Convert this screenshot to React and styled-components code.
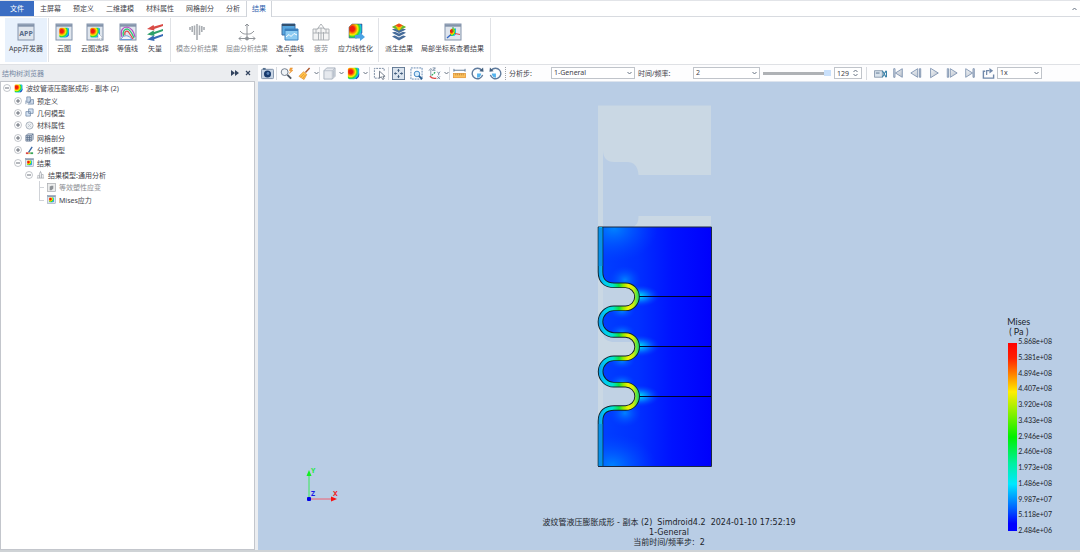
import React, { useState } from 'react';
import styled, { createGlobalStyle } from 'styled-components';

const GlobalStyle = createGlobalStyle`
  * {
    box-sizing: border-box;
  }

  body {
    margin: 0;
    font-family: "Noto Sans", "Noto Sans CJK SC", sans-serif;
    font-size: 7px;
    color: #3f434a;
    background: #ffffff;
  }

  button, input, select {
    font: inherit;
    color: inherit;
    margin: 0;
    padding: 0;
    border: 0;
    background: none;
  }

  svg {
    display: block;
    flex: none;
  }
`;

const Window = styled.div`
  display: flex;
  flex-direction: column;
  min-height: 100vh;
  border-top: 1px solid #e2e4e8;
`;

/* Tabs */
const TabBar = styled.nav`
  display: flex;
  align-items: stretch;
  height: 16px;
  border-bottom: 1px solid #d8dbe0;
`;

const Tab = styled.button`
  padding: 0 6px;
  line-height: 14px;
  white-space: nowrap;
  ${({ $file }) => $file && `
    width: 34px;
    background: #3a6dc3;
    color: #ffffff;
  `}
  ${({ $active }) => $active && `
    padding: 0 5px;
    margin-bottom: -1px;
    border: 1px solid #d0d4da;
    border-width: 0 1px;
    background: #ffffff;
    color: #2f62ad;
  `}
`;

const CollapseButton = styled.button`
  margin-left: auto;
  padding: 0 3px;
`;

/* Ribbon */
const Ribbon = styled.div`
  display: flex;
  height: 48px;
  padding: 1px 0 1px 4px;
  border-bottom: 1px solid #dfe1e5;
`;

const RibbonGroup = styled.div`
  display: flex;
  padding: 0 ${({ $inset }) => $inset}px;
  border-right: 1px solid #e0e2e6;
  margin-bottom: 1px;
`;

const RibbonButton = styled.button`
  display: flex;
  flex-direction: column;
  align-items: center;
  padding: 5px 4px 0;
  white-space: nowrap;
  background: ${({ $active }) => ($active ? '#e8f1fc' : 'transparent')};
  color: ${({ $muted }) => ($muted ? '#85888d' : '#3f434a')};

  span {
    margin-top: 3px;
    line-height: 10px;
  }
`;

/* Body */
const Body = styled.div`
  display: flex;
  flex: 1;
  border-bottom: 2px solid #cfd3d6;
`;

const SidePanel = styled.aside`
  display: flex;
  flex-direction: column;
  flex: 0 0 258px;
  padding-right: 3px;
  background: #ebedf0;
`;

const PanelHeader = styled.div`
  display: flex;
  align-items: center;
  gap: 6px;
  height: 16px;
  padding: 0 4px 0 2px;
  color: #7587a3;

  h2 {
    flex: 1;
    margin: 0;
    font-size: 7px;
    font-weight: 400;
  }
`;

const Tree = styled.div`
  flex: 1;
  border: 1px solid #c3c6cc;
  background: #ffffff;
`;

const TreeList = styled.ul`
  display: grid;
  grid-template-rows: repeat(10, 1fr);
  height: 124px;
  margin: 0;
  padding: 0;
  list-style: none;
`;

const TreeRow = styled.li`
  display: flex;
  align-items: center;
  gap: 3px;
  padding-left: ${({ $level }) => 2 + $level * 11}px;
  white-space: nowrap;
  color: ${({ $muted }) => ($muted ? '#8a8d92' : '#3f434a')};
`;

const Main = styled.main`
  display: flex;
  flex-direction: column;
  flex: 1;
  min-width: 0;
`;

const Toolbar = styled.div`
  display: flex;
  align-items: center;
  height: 17px;
  border-bottom: 1px solid #dde4ee;
  background: #fdfdfe;
`;

const ToolButton = styled.button`
  display: flex;
  align-items: center;
  justify-content: center;
  flex: none;
  width: ${({ $narrow }) => ($narrow ? 6 : 18)}px;
  height: 14px;
`;

const Divider = styled.span`
  flex: none;
  width: 1px;
  height: 13px;
  border-left: 1px ${({ $dotted }) => ($dotted ? 'dotted #a0a4aa' : 'solid #d8dbe0')};
  margin-left: ${({ $space }) => $space || 0}px;
`;

const Playback = styled.div`
  display: flex;
  align-items: center;
  padding-left: 4px;
`;

const FieldLabel = styled.label`
  flex: none;
  width: ${({ $width }) => $width}px;
  padding-left: 3px;
  white-space: nowrap;
`;

const SelectBox = styled.span`
  display: flex;
  align-items: center;
  flex: none;
  width: ${({ $width }) => $width}px;
  height: 12px;
  padding-right: 2px;
  border: 1px solid #c0c4ca;
  background: #ffffff;

  select {
    flex: 1;
    min-width: 0;
    height: 10px;
    padding-left: 2px;
    line-height: 10px;
    appearance: none;
    outline: none;
  }

  svg {
    pointer-events: none;
  }
`;

const Slider = styled.input`
  appearance: none;
  flex: none;
  width: 68px;
  height: 6px;
  margin: 0 3px;
  background: linear-gradient(#aeb1b5, #aeb1b5) center / 100% 3px no-repeat;

  &::-webkit-slider-thumb {
    appearance: none;
    width: 7px;
    height: 6px;
    background: #c9e0fb;
  }
`;

const SpinBox = styled.span`
  display: flex;
  align-items: center;
  flex: none;
  width: 28px;
  height: 12px;
  border: 1px solid #c0c4ca;
  background: #ffffff;

  input {
    width: 18px;
    padding-left: 2px;
    outline: none;
  }
`;

/* Viewport */
const Viewport = styled.section`
  position: relative;
  flex: 1;
  min-height: 468px;
  background: #b9cde5;
  color: #20242a;
`;

const ModelView = styled.svg`
  position: absolute;
  top: 22px;
  left: calc(50% - 72px);
`;

const AxisTriad = styled.svg`
  position: absolute;
  left: 42px;
  bottom: 45px;
`;

const Caption = styled.div`
  position: absolute;
  left: 0;
  right: 0;
  bottom: 2px;
  text-align: center;
  font-family: "DejaVu Sans", "Noto Sans CJK SC", sans-serif;
  font-size: 8px;
  line-height: 10px;
  white-space: pre;
`;

const Legend = styled.div`
  position: absolute;
  right: 28px;
  bottom: 16px;
  font-family: Lato, "Noto Sans CJK SC", sans-serif;
`;

const LegendTitle = styled.div`
  width: 25px;
  font-size: 9px;
  line-height: 9px;
  text-align: center;
  margin-bottom: 1px;
`;

const LegendScale = styled.div`
  display: flex;
  gap: 1px;
  padding-left: 2px;
`;

const LegendBar = styled.div`
  width: 9px;
  margin: 6px 0 3px;
  background: linear-gradient(#ff0000 0%, #ff2000 8%, #ffee00 26%, #80f000 38%, #00f000 50%, #00f0a0 64%, #00e8ff 75%, #0060ff 88%, #0000ff 96%);
`;

const LegendValues = styled.div`
  display: flex;
  flex-direction: column;
  justify-content: space-between;
  height: 197px;
  font-size: 7px;
  line-height: 8px;
`;

const Defs = styled.svg`
  position: absolute;
  width: 0;
  height: 0;
`;

/* Icons */
const SharedDefs = () => (
  <Defs aria-hidden="true">
    <defs>
      <radialGradient id="rainbow" cx="0.25" cy="0.35" r="0.85">
        <stop offset="0.2" stopColor="#f01c10" />
        <stop offset="0.38" stopColor="#ff9a00" />
        <stop offset="0.5" stopColor="#f8f000" />
        <stop offset="0.66" stopColor="#30d830" />
        <stop offset="0.8" stopColor="#18c8e8" />
        <stop offset="1" stopColor="#1040d8" />
      </radialGradient>
      <linearGradient id="steel" x1="0" y1="0" x2="1" y2="1">
        <stop offset="0" stopColor="#f4f6f9" />
        <stop offset="1" stopColor="#b7bfca" />
      </linearGradient>
    </defs>
  </Defs>
);

const BLOB = 'M1 3 Q1 1 3 1 H12 Q14 1 14 3 V9 Q14 14 8 14 H3 Q1 14 1 12 Z';

const Blob = ({ size = 13 }) => (
  <svg width={size} height={size} viewBox="0 0 15 15">
    <path d={BLOB} fill="url(#rainbow)" />
    <path d="M10 13 Q14 11 14 7 V10 L11 14 Z" fill="#2448a8" />
  </svg>
);

const Frame = ({ children, tone = '#8494ab' }) => (
  <>
    <rect x="1" y="1" width="16" height="16" fill="#dfe5ed" stroke={tone} />
    <path d="M1 2.5 H17" stroke={tone} strokeWidth="2.4" />
    {children}
  </>
);

const AppIcon = () => (
  <svg width="18" height="18" viewBox="0 0 18 18">
    <Frame>
      <text x="9" y="13" textAnchor="middle" fontSize="7" fontWeight="700" fill="#586b88">APP</text>
    </Frame>
  </svg>
);

const CloudIcon = ({ pick, size = 18 }) => (
  <svg width={size} height={size} viewBox="0 0 18 18">
    <Frame>
      <g transform="translate(3.5 4) scale(0.75)"><path d={BLOB} fill="url(#rainbow)" /></g>
      {pick && <path d="M12 10 V17 L13.500 15.500 L14.500 17.500 L15.500 17 L15 15 H17 Z" fill="#fff" stroke="#a5afbd" strokeWidth="0.6" />}
    </Frame>
  </svg>
);

const IsolineIcon = () => (
  <svg width="18" height="18" viewBox="0 0 18 18" fill="none">
    <Frame />
    <path d="M3 14 C1 7 4 4 8 4 C13 5 15 9 16 14" stroke="#b44cc0" strokeWidth="1.2" />
    <path d="M4.500 13 C3 8 6 6 8.500 6 C12 7 13 11 15 15" stroke="#2dc270" strokeWidth="1.3" />
    <path d="M6 12 C5 8 8 7.500 9.500 9 C11 11 12 13 14 16" stroke="#e04848" strokeWidth="1.2" />
    <path d="M1.500 16.500 C5 11 10 12 13 16.500 Z" fill="#f3f6fa" stroke="#6d9ad6" />
  </svg>
);

const VectorIcon = () => (
  <svg width="18" height="18" viewBox="0 0 18 18">
    <path d="M17 1 L8 3.500 L7.500 2 L1 6 L8.500 7.500 L8.200 6 L17 3 Z" fill="#d94b46" />
    <path d="M17 6 L8 9 L7.500 7.500 L1 11.500 L8.500 13 L8.200 11.300 L17 8 Z" fill="#2fa06a" />
    <path d="M17 11 L8 14 L7.500 12.500 L1 16.500 L8.500 18 L8.200 16.300 L17 13 Z" fill="#3769b5" />
  </svg>
);

const ModalIcon = () => (
  <svg width="18" height="18" viewBox="0 0 18 18" stroke="#a9adb2" strokeWidth="1.6">
    <path d="M9 1 V17 M6.500 2.500 V12 M11.500 2.500 V12 M4.200 3 V9 M13.800 3 V9 M2 4 V7 M16 4 V7" />
  </svg>
);

const BucklingIcon = () => (
  <svg width="18" height="18" viewBox="0 0 18 18" fill="none" stroke="#8f9398">
    <path d="M9 1 V16 M1 15.500 H17 M7 3 L9 1 L11 3 M15 13.500 L17 15.500 L15 17.500 M3 13.500 L1 15.500 L3 17.500 M2 8 C5 11.500 7 11 9 11 C11 11 13 11.500 16 8" />
    <circle cx="9" cy="15.500" r="1.500" fill="#8f9398" />
  </svg>
);

const CurveIcon = () => (
  <svg width="18" height="18" viewBox="0 0 18 18">
    <path d="M1 1 H14 V12 H1 Z" fill="#57a6df" stroke="#3f6da0" />
    <path d="M1 2 H14" stroke="#33506f" strokeWidth="2" />
    <path d="M4 6 H17 V17 H4 Z" fill="#8ccbf2" stroke="#3e86c4" />
    <path d="M4 7 H17" stroke="#3a7fbd" strokeWidth="2" />
    <path d="M5 14 L8 11.500 L10 13.500 L13 10.500 L16 12" fill="none" stroke="#fff" />
  </svg>
);

const FatigueIcon = () => (
  <svg width="18" height="18" viewBox="0 0 18 18" fill="#f4f4f4" stroke="#a7abb0" strokeWidth="0.9">
    <path d="M9 1 L6 5 V9 M9 1 L12 5 V9" fill="none" />
    <path d="M1 6 H6 V5 H12 V6 H17 V17 H1 Z" />
    <path d="M1 10 H17 M4 6 V10 M9 5 V17 M14 6 V10 M6.500 9 V17 M11.500 9 V17" fill="none" />
  </svg>
);

const LinearIcon = () => (
  <svg width="18" height="18" viewBox="0 0 18 18">
    <path d="M2 4 L5 1 H15 V10 L10 15 H2 Z" fill="url(#rainbow)" stroke="#446" strokeWidth="0.500" />
    <path d="M8 12 H13 V9.500 L18 14 L13 18 V15.500 H8 Z" fill="#4ba3e4" />
  </svg>
);

const LayersIcon = () => (
  <svg width="18" height="18" viewBox="0 0 18 18">
    <path d="M2 13.500 L9 10.500 L16 13.500 L9 17.500 Z" fill="#466c9a" />
    <path d="M2 11 L9 8 L16 11 L9 14.500 Z" fill="#fff" />
    <path d="M2 9.800 L9 7 L16 9.800 L9 13.500 Z" fill="#466c9a" />
    <path d="M2 7.500 L9 5 L16 7.500 L9 10.500 Z" fill="#fff" />
    <path d="M2 6.500 L9 4 L16 6.500 L9 10 Z" fill="#466c9a" />
    <path d="M2 4 L9 0.500 L16 4 L9 7.500 Z" fill="#ffc400" />
    <path d="M5 2.500 L9 0.500 L13 2.500 L9 4.500 Z" fill="#ef4b23" />
    <path d="M2 4 L5.500 2.300 L9 7.500 Z M16 4 L12.500 2.300 L9 7.500 Z" fill="#5cb840" />
    <path d="M5 2.500 L9 7.500 L13 2.500 L9 4.500 Z" fill="#ffc400" />
  </svg>
);

const LocalAxisIcon = () => (
  <svg width="18" height="18" viewBox="0 0 18 18">
    <Frame />
    <path d="M6 7 L8 5.500 H12 V11 L10 13 H6 Z" fill="url(#rainbow)" />
    <path d="M9 9 V4" stroke="#2da843" />
    <path d="M11 10.500 L16 11.500" stroke="#e34343" />
    <path d="M7 11.500 L3 15" stroke="#3065c5" strokeWidth="1.300" />
  </svg>
);

const Chevron = ({ up }) => (
  <svg width="5" height="4" viewBox="0 0 5 4" fill="none" stroke="#667282">
    <path d={up ? 'M0.500 3 L2.500 1 L4.500 3' : 'M0.500 1 L2.500 3 L4.500 1'} />
  </svg>
);

const Tool = ({ children, size = 13 }) => (
  <svg width={size} height={size} viewBox="0 0 14 14" fill="none" stroke="#55708f">
    {children}
  </svg>
);

const CameraIcon = () => (
  <Tool>
    <rect x="0.500" y="2.500" width="13" height="10" rx="1" fill="#c7d4e4" stroke="#7d90a8" />
    <circle cx="7" cy="7.500" r="3.800" fill="#17396b" stroke="none" />
    <circle cx="7.500" cy="7" r="1.500" fill="#5b84b8" stroke="none" />
    <path d="M2 2 H5" strokeWidth="2" />
  </Tool>
);

const SearchIcon = () => (
  <Tool>
    <circle cx="5" cy="5.500" r="3.700" fill="#eef2f6" stroke="#6b7787" />
    <path d="M8 8.500 L12 12.500" stroke="#4a5563" strokeWidth="2" />
    <path d="M11 1 L10 4 H12 L10 7 L14 3.500 H12 L13.500 1 Z" fill="#f1a13a" stroke="#e58a24" strokeWidth="0.500" />
  </Tool>
);

const BroomIcon = () => (
  <Tool>
    <path d="M8 6 L12.500 1" stroke="#ad5a30" strokeWidth="1.600" />
    <path d="M6 5 L9.500 8 L6.500 13.500 L1 10 Z" fill="#ffc34a" stroke="#e08a28" strokeWidth="0.700" />
    <path d="M3 11 L6.500 7.500 M5 12.500 L8 8.500" stroke="#e08a28" strokeWidth="0.700" />
  </Tool>
);

const CubeIcon = () => (
  <Tool>
    <path d="M1 4 L4 1 H13 V10 L10 13 H1 Z" fill="#e6e9ee" stroke="#a9b2be" />
    <path d="M1 4 H10 V13 M10 4 L13 1" stroke="#a9b2be" strokeWidth="0.700" />
    <path d="M10.500 4.200 L12.500 2.200 V9.700 L10.500 11.700 Z" fill="#bac2cd" stroke="none" />
  </Tool>
);

const PickIcon = () => (
  <Tool>
    <path d="M7 12 H1.500 V1.500 H12 V5" strokeDasharray="2 1" stroke="#70839b" />
    <path d="M7 4.500 V12 L9 10.500 L10.500 13.500 L12 12.500 L10.700 10 H13 Z" fill="#fff" stroke="#5e6978" strokeWidth="0.900" />
  </Tool>
);

const FitIcon = () => (
  <Tool>
    <rect x="0.500" y="0.500" width="13" height="13" fill="#dbe4ee" stroke="#5f7792" />
    <path d="M7 3 V5.500 M7 8.500 V11 M3 7 H5.500 M8.500 7 H11" stroke="#3f5b7c" />
    <path d="M5.500 4 L7 2 L8.500 4 Z M5.500 10 L7 12 L8.500 10 Z M4 5.500 L2 7 L4 8.500 Z M10 5.500 L12 7 L10 8.500 Z" fill="#3f5b7c" stroke="none" />
  </Tool>
);

const ZoomAreaIcon = () => (
  <Tool>
    <rect x="1" y="1" width="12" height="12" strokeDasharray="2 1" stroke="#5c83ad" />
    <circle cx="7.500" cy="7.500" r="3" fill="#d7ecfb" stroke="#3a83c2" />
    <path d="M9.500 9.500 L13 13" stroke="#275d93" strokeWidth="2" />
  </Tool>
);

const AxesIcon = () => (
  <Tool>
    <path d="M3 10 V3 M1 4 L3 1.500 L5 4" stroke="#8494a7" />
    <path d="M4 9 L8.500 5" stroke="#2da85b" strokeDasharray="2 1" strokeWidth="1.300" />
    <path d="M2 10 C4 12 7 12.500 9 12" stroke="#dd4545" strokeWidth="1.500" />
    <path d="M5 1 H8 L5.500 3.500 H8 M10 5 L11.500 7 L13 5 M11.500 7 V9 M10 10 L13 13 M13 10 L10 13" strokeWidth="0.800" />
  </Tool>
);

const RulerIcon = () => (
  <Tool>
    <path d="M1 3.500 H13 M1 2 V5 M13 2 V5" stroke="#5b7693" />
    <rect x="0.500" y="7" width="13" height="4.500" fill="#fbbf5b" stroke="#e29432" strokeWidth="0.800" />
    <path d="M3 7 V9 M5 7 V9 M7 7 V9 M9 7 V9 M11 7 V9" stroke="#a76d28" strokeWidth="0.600" />
  </Tool>
);

const RotateIcon = ({ flip }) => (
  <Tool>
    <g transform={flip ? 'translate(14 0) scale(-1 1)' : undefined}>
      <path d="M11.500 3.500 A5.700 5.700 0 1 0 12.500 8.500" stroke="#5f7b9d" strokeWidth="1.500" />
      <path d="M9 4.500 L13.500 5 L13 0.500 Z" fill="#43607f" stroke="none" />
      <path d="M6.500 7 V11.500 A4.500 4.500 0 0 0 11 7 Z" fill="#55b4ee" stroke="none" />
    </g>
  </Tool>
);

const RecordIcon = () => (
  <Tool>
    <path d="M0.500 4 H9 V11 H0.500 Z" fill="#d8e2ec" stroke="#8798ad" />
    <path d="M2 6.500 H6" />
    <path d="M9 4 L13 11 M13 4 L9 11 M13.500 4 V11" stroke="#3d84aa" strokeWidth="1.300" />
  </Tool>
);

const PlayShape = ({ kind }) => (
  <Tool size={12}>
    <g fill="url(#steel)" stroke="#7b90ae">
      {kind === 'first' && <path d="M2 2 H3.500 V12 H2 Z M12 2 V12 L4 7 Z" />}
      {kind === 'prev' && <path d="M9 2 V12 L1 7 Z M11 2 H12.500 V12 H11 Z" />}
      {kind === 'play' && <path d="M3 1.500 V12.500 L12 7 Z" />}
      {kind === 'next' && <path d="M5 2 V12 L13 7 Z M1.500 2 H3 V12 H1.500 Z" />}
      {kind === 'last' && <path d="M2 2 V12 L10 7 Z M10.500 2 H12 V12 H10.500 Z" />}
    </g>
  </Tool>
);

const LoopIcon = () => (
  <Tool>
    <path d="M3.500 4.500 H1.500 V12 H12.500 V8" stroke="#7189aa" strokeWidth="1.500" />
    <path d="M5 8.500 V4 H8" stroke="#7189aa" strokeWidth="1.300" />
    <path d="M8 1 L12 4 L8 7 Z" fill="#7189aa" stroke="none" />
  </Tool>
);

const Expander = styled.button`
  flex: none;
  width: 8px;
  height: 8px;
`;

const ExpandIcon = ({ open }) => (
  <svg width="8" height="8" viewBox="0 0 8 8" fill="none" stroke="#59606b">
    <circle cx="4" cy="4" r="3.500" stroke="#a9adb4" strokeWidth="0.700" />
    <path d={open ? 'M2 4 H6' : 'M2 4 H6 M4 2 V6'} strokeWidth="0.900" />
  </svg>
);

const TreeIcon = ({ kind }) => {
  if (kind === 'root') return <Blob size={9} />;
  if (kind === 'result') return <CloudIcon size={9} />;
  return (
    <svg width="9" height="9" viewBox="0 0 10 10" fill="none" stroke="#6d84a3" strokeWidth="0.800">
      {kind === 'define' && <path d="M2 1 H6 V7 H2 Z M1 9 V5 M4 8 L7 4 H9.500 V9 H3" fill="#cbd8e8" />}
      {kind === 'geometry' && <path d="M4 1 H9 V6 H4 Z M1 4 H6 V9 H1 Z" fill="#d6e4f4" />}
      {kind === 'material' && (
        <>
          <circle cx="5" cy="5" r="4" fill="#edf0f3" stroke="#95a0ad" />
          <path d="M3 3 L7 7 M7 3 L3 7" stroke="#b5bdc7" />
        </>
      )}
      {kind === 'mesh' && <path d="M1 3 L3 1 H9 V7 L7 9 H1 Z M1 3 H7 V9 M7 3 L9 1 M3 3 V9 M5 3 V9 M1 5 H7 M1 7 H7" fill="#dbe2ea" stroke="#536886" />}
      {kind === 'analysis' && (
        <>
          <path d="M1 8 H4" stroke="#d94444" strokeWidth="2" />
          <path d="M4 8 H6" stroke="#f0b93e" strokeWidth="2" />
          <path d="M6 8 H9" stroke="#38a55a" strokeWidth="2" />
          <path d="M4 7 L8 1" stroke="#3a66a4" strokeWidth="1.500" />
        </>
      )}
      {kind === 'model' && <path d="M1 9 H9 M2 9 V6 H4 V9 M4 9 V3 H6 V9 M6 9 V5 H8 V9 M5 3 V1" stroke="#a9adb2" />}
      {kind === 'grey' && (
        <>
          <rect x="0.500" y="0.500" width="9" height="9" fill="#eceded" stroke="#a9acb0" />
          <path d="M3 4 L5 3 H7 V6 L5 8 H3 Z" fill="#8d9196" stroke="none" />
        </>
      )}
    </svg>
  );
};

const BranchLine = styled.span`
  align-self: stretch;
  flex: none;
  width: 8px;
  display: flex;
  flex-direction: column;

  &::before {
    content: "";
    height: 50%;
    margin-left: 3px;
    border-left: 1px solid #d0d3d8;
    border-bottom: 1px solid #d0d3d8;
  }

  &::after {
    content: "";
    flex: 1;
    margin-left: 3px;
    border-left: ${({ $last }) => ($last ? 0 : 1)}px solid #d0d3d8;
  }
`;

/* Tube centre line: three convolutions between two straight ends */
const TUBE = [
  'M600.5 227 V272 C600.5 281 606 285.300 614 285.300',
  'H625.5 A11.500 11.500 0 0 1 625.5 308.300 H613.8 A13.300 13.300 0 0 0 613.8 335',
  'H625.5 A11.600 11.600 0 0 1 625.5 358.300 H613.8 A13.200 13.200 0 0 0 613.8 384.700',
  'H625.5 A11.600 11.600 0 0 1 625.5 408 H614 C606 408 600.5 412 600.5 421 V466',
].join(' ');

const CONTACTS = [296, 346, 396];

const Model = () => (
  <ModelView width="116" height="364" viewBox="597 104 116 364" role="img" aria-label="Mises">
    <defs>
      <linearGradient id="die" gradientUnits="userSpaceOnUse" x1="598" y1="0" x2="712" y2="0">
        <stop offset="0" stopColor="#0040ff" />
        <stop offset="0.35" stopColor="#0030ff" />
        <stop offset="0.65" stopColor="#0012ff" />
        <stop offset="1" stopColor="#0000fc" />
      </linearGradient>
      <linearGradient id="tube" gradientUnits="userSpaceOnUse" x1="598" y1="0" x2="640" y2="0">
        <stop offset="0" stopColor="#1098e8" />
        <stop offset="0.15" stopColor="#00c8f4" />
        <stop offset="0.35" stopColor="#00e4d0" />
        <stop offset="0.5" stopColor="#10e040" />
        <stop offset="0.6" stopColor="#90ec00" />
        <stop offset="0.72" stopColor="#f4f000" />
        <stop offset="0.85" stopColor="#c8ee10" />
        <stop offset="0.97" stopColor="#18dc60" />
      </linearGradient>
      <radialGradient id="contact">
        <stop offset="0" stopColor="#00f0f0" />
        <stop offset="0.4" stopColor="#00a8ff" stopOpacity="0.7" />
        <stop offset="1" stopColor="#0040ff" stopOpacity="0" />
      </radialGradient>
      <radialGradient id="glow">
        <stop offset="0" stopColor="#009cff" stopOpacity="0.75" />
        <stop offset="1" stopColor="#0050ff" stopOpacity="0" />
      </radialGradient>
      <clipPath id="dieClip">
        <path d={`${TUBE} H711.5 V227 Z`} />
      </clipPath>
    </defs>
    <g fill="#cad8e4">
      <path d="M598 105.500 H711 V175 H638.500 C638 166 634 162 627 162 H614 C607 162 603 158 603 150 V466 H598 Z" />
      <path d="M638.500 216 H711 V227 H633 C637 225 638.500 222 638.500 216 Z" />
      <path d="M603 286 H625 A11 11 0 0 1 625 308 H603 Z M603 385 H625 A11 11 0 0 1 625 408 H603 Z" opacity="0.5" />
      <path d="M603 335 C605 340 609 342 614 342 H636 A11 11 0 0 1 625 358 H603 Z" />
    </g>
    <g clipPath="url(#dieClip)">
      <rect x="598" y="227" width="114" height="240" fill="url(#die)" />
      <ellipse cx="614" cy="228" rx="44" ry="34" fill="url(#glow)" />
      <ellipse cx="612" cy="466" rx="44" ry="32" fill="url(#glow)" />
      <ellipse cx="625" cy="280" rx="16" ry="14" fill="url(#glow)" />
      <ellipse cx="625" cy="413" rx="16" ry="14" fill="url(#glow)" />
      {[311, 332, 361, 382].map((y) => (
        <ellipse key={y} cx="622" cy={y} rx="13" ry="8" fill="url(#glow)" />
      ))}
      {CONTACTS.map((y) => (
        <ellipse key={y} cx="639" cy={y} rx="21" ry="11" fill="url(#contact)" />
      ))}
    </g>
    {CONTACTS.map((y) => (
      <path key={y} d={`M639 ${y}.5 H711`} stroke="#00042c" />
    ))}
    <path d="M598 227 H711.5 V466.500 H598" fill="none" stroke="#1c2840" />
    <path d={TUBE} fill="none" stroke="#10242c" strokeWidth="5.600" />
    <path d={TUBE} fill="none" stroke="url(#tube)" strokeWidth="3.700" />
    <path d="M600.5 228 V266 M600.5 424 V466" stroke="#0890ea" strokeWidth="3.700" />
  </ModelView>
);

const Triad = () => (
  <AxisTriad width="42" height="40" viewBox="0 0 42 40" fontSize="7" fontWeight="700">
    <path d="M9 34 V10" stroke="#38e858" />
    <path d="M6.500 11 L9 5 L11.500 11 Z" fill="#10f020" />
    <path d="M9 34 H31" stroke="#f06070" />
    <path d="M31 31.500 L37 34 L31 36.500 Z" fill="#f81010" />
    <rect x="7" y="32" width="4" height="4" rx="1" fill="#0000e8" />
    <text x="11" y="8" fill="#20e840">Y</text>
    <text x="11" y="31" fill="#1818e8">Z</text>
    <text x="33" y="31" fill="#f02020">X</text>
  </AxisTriad>
);

const TABS = ['主屏幕', '预定义', '二维建模', '材料属性', '网格剖分', '分析'];

const GROUPS = [
  { inset: 1, items: [{ label: 'App开发器', icon: <AppIcon />, active: true }] },
  {
    inset: 2,
    items: [
      { label: '云图', icon: <CloudIcon /> },
      { label: '云图选择', icon: <CloudIcon pick /> },
      { label: '等值线', icon: <IsolineIcon /> },
      { label: '矢量', icon: <VectorIcon /> },
    ],
  },
  {
    inset: 1,
    items: [
      { label: '模态分析结果', icon: <ModalIcon />, muted: true },
      { label: '屈曲分析结果', icon: <BucklingIcon />, muted: true },
      { label: '选点曲线', icon: <CurveIcon />, menu: true },
      { label: '疲劳', icon: <FatigueIcon />, muted: true },
      { label: '应力线性化', icon: <LinearIcon /> },
    ],
  },
  {
    inset: 2,
    items: [
      { label: '派生结果', icon: <LayersIcon /> },
      { label: '局部坐标系查看结果', icon: <LocalAxisIcon /> },
    ],
  },
];

const TREE = [
  { level: 0, label: '波纹管液压膨胀成形 - 副本 (2)', kind: 'root', open: true },
  { level: 1, label: '预定义', kind: 'define' },
  { level: 1, label: '几何模型', kind: 'geometry' },
  { level: 1, label: '材料属性', kind: 'material' },
  { level: 1, label: '网格剖分', kind: 'mesh' },
  { level: 1, label: '分析模型', kind: 'analysis' },
  { level: 1, label: '结果', kind: 'result', open: true },
  { level: 2, label: '结果模型:通用分析', kind: 'model', open: true },
  { level: 3, label: '等效塑性应变', kind: 'grey', leaf: true, muted: true },
  { level: 3, label: 'Mises应力', kind: 'result', leaf: true, last: true },
];

const VALUES = [
  '5.868e+08', '5.381e+08', '4.894e+08', '4.407e+08', '3.920e+08', '3.433e+08', '2.946e+08',
  '2.460e+08', '1.973e+08', '1.486e+08', '9.987e+07', '5.118e+07', '2.484e+06',
];

const App = () => {
  const [frame, setFrame] = useState(129);
  const changeFrame = (event) => setFrame(Number(event.target.value) || 0);

  return (
    <Window>
      <GlobalStyle />
      <SharedDefs />
      <TabBar>
        <Tab $file>文件</Tab>
        {TABS.map((tab) => (
          <Tab key={tab}>{tab}</Tab>
        ))}
        <Tab $active>结果</Tab>
        <CollapseButton aria-label="收起">
          <Chevron up />
        </CollapseButton>
      </TabBar>

      <Ribbon>
        {GROUPS.map((group, index) => (
          <RibbonGroup key={index} $inset={group.inset}>
            {group.items.map((item) => (
              <RibbonButton key={item.label} $active={item.active} $muted={item.muted}>
                {item.icon}
                <span>{item.label}</span>
                {item.menu && (
                  <svg width="4" height="4" viewBox="0 0 4 4"><path d="M0 1 H4 L2 3 Z" fill="#6a6e75" /></svg>
                )}
              </RibbonButton>
            ))}
          </RibbonGroup>
        ))}
      </Ribbon>

      <Body>
        <SidePanel>
          <PanelHeader>
            <h2>结构树浏览器</h2>
            <button aria-label="展开">
              <svg width="8" height="6" viewBox="0 0 8 6" fill="#33445f"><path d="M0 0 L4 3 L0 6 Z M4 0 L8 3 L4 6 Z" /></svg>
            </button>
            <button aria-label="关闭">
              <svg width="6" height="6" viewBox="0 0 6 6" stroke="#33445f" strokeWidth="1.200"><path d="M1 1 L5 5 M5 1 L1 5" /></svg>
            </button>
          </PanelHeader>
          <Tree>
            <TreeList>
              {TREE.map((row) => (
                <TreeRow key={row.label} $level={row.level} $muted={row.muted}>
                  {row.leaf ? (
                    <BranchLine $last={row.last} />
                  ) : (
                    <Expander aria-label={row.label}><ExpandIcon open={row.open} /></Expander>
                  )}
                  <TreeIcon kind={row.kind} />
                  <span>{row.label}</span>
                </TreeRow>
              ))}
            </TreeList>
          </Tree>
        </SidePanel>

        <Main>
          <Toolbar>
            <ToolButton aria-label="截图"><CameraIcon /></ToolButton>
            <Divider />
            <ToolButton aria-label="查询"><SearchIcon /></ToolButton>
            <ToolButton aria-label="清除"><BroomIcon /></ToolButton>
            <ToolButton $narrow aria-label="清除选项"><Chevron /></ToolButton>
            <Divider />
            <ToolButton aria-label="显示"><CubeIcon /></ToolButton>
            <ToolButton $narrow aria-label="显示选项"><Chevron /></ToolButton>
            <ToolButton aria-label="云图"><Blob /></ToolButton>
            <ToolButton $narrow aria-label="云图选项"><Chevron /></ToolButton>
            <Divider $space={1} />
            <ToolButton aria-label="选择"><PickIcon /></ToolButton>
            <Divider />
            <ToolButton aria-label="适应窗口"><FitIcon /></ToolButton>
            <ToolButton aria-label="框选缩放"><ZoomAreaIcon /></ToolButton>
            <ToolButton aria-label="视图"><AxesIcon /></ToolButton>
            <ToolButton $narrow aria-label="视图选项"><Chevron /></ToolButton>
            <Divider />
            <ToolButton aria-label="测量"><RulerIcon /></ToolButton>
            <ToolButton aria-label="顺时针"><RotateIcon /></ToolButton>
            <ToolButton aria-label="逆时针"><RotateIcon flip /></ToolButton>
            <Divider $dotted $space={1} />
            <FieldLabel htmlFor="step" $width={45}>分析步:</FieldLabel>
            <SelectBox $width={84}>
              <select id="step"><option>1-General</option></select>
              <Chevron />
            </SelectBox>
            <FieldLabel htmlFor="time" $width={58}>时间/频率:</FieldLabel>
            <SelectBox $width={67}>
              <select id="time"><option>2</option></select>
              <Chevron />
            </SelectBox>
            <Slider type="range" min="0" max="129" value={frame} onChange={changeFrame} aria-label="帧" />
            <SpinBox>
              <input type="text" value={frame} onChange={changeFrame} aria-label="帧号" />
              <span>
                <Chevron up />
                <Chevron />
              </span>
            </SpinBox>
            <Divider $space={4} />
            <Playback>
              <ToolButton aria-label="录制"><RecordIcon /></ToolButton>
              <ToolButton aria-label="首帧"><PlayShape kind="first" /></ToolButton>
              <ToolButton aria-label="上一帧"><PlayShape kind="prev" /></ToolButton>
              <ToolButton aria-label="播放"><PlayShape kind="play" /></ToolButton>
              <ToolButton aria-label="下一帧"><PlayShape kind="next" /></ToolButton>
              <ToolButton aria-label="末帧"><PlayShape kind="last" /></ToolButton>
              <ToolButton aria-label="循环"><LoopIcon /></ToolButton>
              <SelectBox $width={45}>
                <select aria-label="速度"><option>1x</option></select>
                <Chevron />
              </SelectBox>
            </Playback>
          </Toolbar>

          <Viewport>
            <Model />
            <Triad />
            <Caption>
              <div>波纹管液压膨胀成形 - 副本 (2)  Simdroid4.2  2024-01-10 17:52:19</div>
              <div>1-General</div>
              <div>当前时间/频率步:  2</div>
            </Caption>
            <Legend>
              <LegendTitle>Mises</LegendTitle>
              <LegendTitle>( Pa )</LegendTitle>
              <LegendScale>
                <LegendBar />
                <LegendValues>
                  {VALUES.map((value) => (
                    <span key={value}>{value}</span>
                  ))}
                </LegendValues>
              </LegendScale>
            </Legend>
          </Viewport>
        </Main>
      </Body>
    </Window>
  );
};

export default App;
